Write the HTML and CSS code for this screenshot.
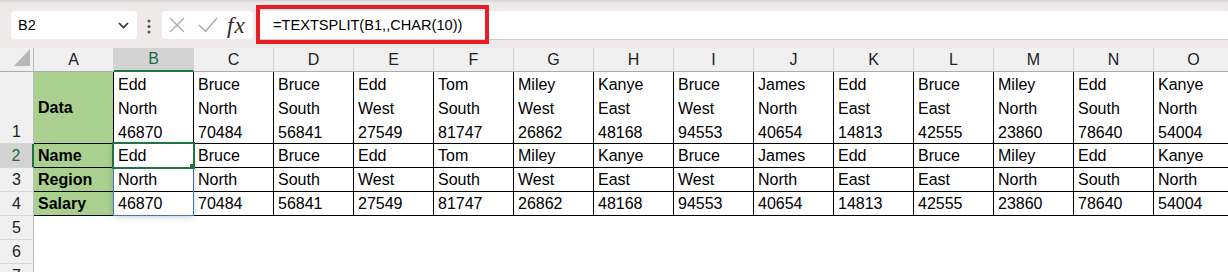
FILE: index.html
```html
<!DOCTYPE html>
<html lang="en">
  <head>
    <meta charset="utf-8" />
    <title>TEXTSPLIT</title>
    <link rel="stylesheet" href="styles.css">
  </head>

  <body>
    <div class="formula-bar">
      <div class="name-box">
        <span>B2</span>
        <svg width="11" height="7" viewBox="0 0 11 7"><path d="M1 1 L5.5 5.5 L10 1" fill="none" stroke="#333" stroke-width="1.7" /></svg>
      </div>
      <svg class="dots" width="4" height="15" viewBox="0 0 4 15">
        <circle cx="2" cy="2" r="1.5" fill="#555" />
        <circle cx="2" cy="7.5" r="1.5" fill="#555" />
        <circle cx="2" cy="13" r="1.5" fill="#555" />
      </svg>
      <div class="fx-box">
        <svg width="16" height="16" viewBox="0 0 16 16"><path d="M1 1 L15 15 M15 1 L1 15" stroke="#a8a8a8" stroke-width="1.2" /></svg>
        <svg class="check" width="20" height="16" viewBox="0 0 20 16"><path d="M1 8 L7.5 14.5 L19 1" fill="none" stroke="#a8a8a8" stroke-width="1.2" /></svg>
        <span class="fx">fx</span>
      </div>
      <div class="formula-input">=TEXTSPLIT(B1,,CHAR(10))</div>
      <div class="highlight"></div>
    </div>

    <div class="sheet">
      <div class="hd corner"><svg width="16" height="17" viewBox="0 0 16 17"><path d="M16 0 L16 17 L0 17 Z" fill="#b7b7b7" /></svg></div>
      <div class="hd">A</div>
      <div class="hd sel">B</div>
      <div class="hd">C</div>
      <div class="hd">D</div>
      <div class="hd">E</div>
      <div class="hd">F</div>
      <div class="hd">G</div>
      <div class="hd">H</div>
      <div class="hd">I</div>
      <div class="hd">J</div>
      <div class="hd">K</div>
      <div class="hd">L</div>
      <div class="hd">M</div>
      <div class="hd">N</div>
      <div class="hd">O</div>

      <div class="rh tall">1</div>
      <div class="c label mid">Data</div>
      <div class="c wrap">Edd<br>North<br>46870</div>
      <div class="c wrap">Bruce<br>North<br>70484</div>
      <div class="c wrap">Bruce<br>South<br>56841</div>
      <div class="c wrap">Edd<br>West<br>27549</div>
      <div class="c wrap">Tom<br>South<br>81747</div>
      <div class="c wrap">Miley<br>West<br>26862</div>
      <div class="c wrap">Kanye<br>East<br>48168</div>
      <div class="c wrap">Bruce<br>West<br>94553</div>
      <div class="c wrap">James<br>North<br>40654</div>
      <div class="c wrap">Edd<br>East<br>14813</div>
      <div class="c wrap">Bruce<br>East<br>42555</div>
      <div class="c wrap">Miley<br>North<br>23860</div>
      <div class="c wrap">Edd<br>South<br>78640</div>
      <div class="c wrap">Kanye<br>North<br>54004</div>

      <div class="rh sel">2</div>
      <div class="c label">Name</div>
      <div class="c">Edd</div>
      <div class="c">Bruce</div>
      <div class="c">Bruce</div>
      <div class="c">Edd</div>
      <div class="c">Tom</div>
      <div class="c">Miley</div>
      <div class="c">Kanye</div>
      <div class="c">Bruce</div>
      <div class="c">James</div>
      <div class="c">Edd</div>
      <div class="c">Bruce</div>
      <div class="c">Miley</div>
      <div class="c">Edd</div>
      <div class="c">Kanye</div>

      <div class="rh">3</div>
      <div class="c label">Region</div>
      <div class="c">North</div>
      <div class="c">North</div>
      <div class="c">South</div>
      <div class="c">West</div>
      <div class="c">South</div>
      <div class="c">West</div>
      <div class="c">East</div>
      <div class="c">West</div>
      <div class="c">North</div>
      <div class="c">East</div>
      <div class="c">East</div>
      <div class="c">North</div>
      <div class="c">South</div>
      <div class="c">North</div>

      <div class="rh">4</div>
      <div class="c label">Salary</div>
      <div class="c">46870</div>
      <div class="c">70484</div>
      <div class="c">56841</div>
      <div class="c">27549</div>
      <div class="c">81747</div>
      <div class="c">26862</div>
      <div class="c">48168</div>
      <div class="c">94553</div>
      <div class="c">40654</div>
      <div class="c">14813</div>
      <div class="c">42555</div>
      <div class="c">23860</div>
      <div class="c">78640</div>
      <div class="c">54004</div>

      <div class="rh">5</div>
      <div class="rh">6</div>
      <div class="rh">7</div>

      <!-- spill range B2:B4 and active cell -->
      <div class="spill"></div>
      <div class="active"><span class="handle"></span></div>
    </div>
  </body>
</html>
```

FILE: styles.css
```css
body {
  margin: 0;
  width: 1228px;
  height: 272px;
  overflow: hidden;
  background: #fff;
  font-family: "Liberation Sans", Arial, sans-serif;
  color: #000;
}

/* ---------- formula bar ---------- */

.formula-bar {
  position: relative;
  height: 48px;
  box-sizing: border-box;
  padding-top: 11px;
  display: flex;
  align-items: flex-start;
  background: #eeeaea;
  box-shadow: inset 0 3px 3px -2px rgba(0, 0, 0, 0.12);
}

.name-box {
  margin-left: 11px;
  width: 126px;
  height: 28px;
  box-sizing: border-box;
  padding: 0 8px 0 7px;
  display: flex;
  align-items: center;
  justify-content: space-between;
  background: #fff;
  border-radius: 4px;
  font-size: 14.5px;
}

.dots {
  margin: 8px 0 0 10px;
}

.fx-box {
  margin-left: 11px;
  width: 91px;
  height: 28px;
  box-sizing: border-box;
  padding-left: 7px;
  display: flex;
  align-items: center;
  background: #fff;
  border-radius: 4px;
}

.fx-box .check {
  margin-left: 13px;
}

.fx {
  margin-left: 9px;
  margin-top: 2px;
  font-family: "Liberation Serif", "Times New Roman", serif;
  font-style: italic;
  font-size: 23px;
  letter-spacing: 1px;
  color: #2b2b2b;
  line-height: 28px;
}

.formula-input {
  margin-left: 6px;
  flex: 1;
  height: 28px;
  padding-left: 14px;
  background: #fff;
  border-bottom: 1px solid #cfcbcb;
  font-size: 14.6px;
  line-height: 28px;
}

.highlight {
  position: absolute;
  left: 256px;
  top: 5px;
  width: 233px;
  height: 39px;
  box-sizing: border-box;
  border: 4px solid #ec1c24;
}

/* ---------- grid ---------- */

.sheet {
  position: relative;
  display: grid;
  grid-template-columns: 34px repeat(15, 80px);
  grid-template-rows: 24px 72px repeat(6, 24px);
  font-size: 16px;
}

.sheet > div {
  box-sizing: border-box;
  white-space: nowrap;
  overflow: hidden;
}

.hd {
  background: #f0f0f0;
  border-right: 1px solid #d2d2d2;
  border-bottom: 1px solid #ababab;
  text-align: center;
  line-height: 23px;
  color: #222;
}

.hd.corner {
  display: flex;
  justify-content: flex-end;
  align-items: flex-end;
  padding: 0 3px 5px 0;
  border-right-color: #bdbdbd;
}

.hd.sel {
  background: #d3d3d3;
  color: #1e6b41;
  border-bottom: 2px solid #217346;
  line-height: 22px;
}

.rh {
  grid-column: 1;
  background: #f0f0f0;
  border-right: 1px solid #bdbdbd;
  border-bottom: 1px solid #d6d6d6;
  text-align: center;
  line-height: 23px;
  color: #222;
}

.rh.tall {
  display: flex;
  align-items: flex-end;
  justify-content: center;
}

.rh.sel {
  background: #d3d3d3;
  color: #1e6b41;
  border-right: 2px solid #217346;
}

.c {
  padding-left: 4px;
  border-right: 1px solid #000;
  border-bottom: 1px solid #000;
  line-height: 23px;
}

.c.wrap {
  line-height: 24px;
  padding-top: 1px;
}

.label {
  background: #a9d08e;
  font-weight: bold;
}

.label.mid {
  display: flex;
  align-items: center;
}

.spill {
  position: absolute;
  left: 113px;
  top: 95px;
  width: 81px;
  height: 73px;
  box-sizing: border-box;
  border: 1px solid #4472c4;
  box-shadow: 0 1px 6px rgba(0, 0, 0, 0.18);
}

.active {
  position: absolute;
  left: 112px;
  top: 94px;
  width: 83px;
  height: 27px;
  box-sizing: border-box;
  border: 2px solid #217346;
}

.handle {
  position: absolute;
  right: -4px;
  bottom: -4px;
  width: 6px;
  height: 6px;
  background: #217346;
  border: 1px solid #fff;
}
```
